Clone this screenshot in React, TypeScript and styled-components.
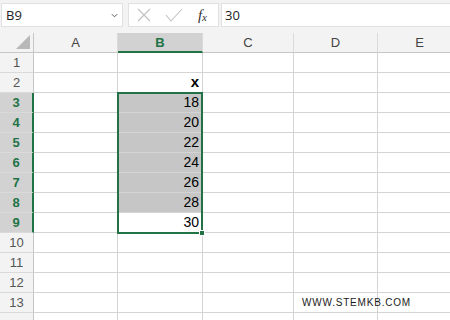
import React from "react";
import styled, { createGlobalStyle } from "styled-components";

const GREEN = "#217346";
const LINE = "#d4d4d4";

const columns = ["A", "B", "C", "D", "E"];
const values: Record<number, string> = {
  2: "x",
  3: "18",
  4: "20",
  5: "22",
  6: "24",
  7: "26",
  8: "28",
  9: "30",
};
const rows = Array.from({ length: 14 }, (_, i) => i + 1);

const isSelRow = (r: number) => r >= 3 && r <= 9;

const App = () => {
  return (
    <>
      <GlobalStyle />
      <Window>
        <Toolbar>
          <NameBox>
            <span>B9</span>
            <Chevron viewBox="0 0 8 5">
              <path d="M1 1l3 3 3-3" fill="none" stroke="#555" strokeWidth="1.1" />
            </Chevron>
          </NameBox>
          <IconBox>
            <svg width="14" height="14" viewBox="0 0 14 14">
              <path d="M1 1l12 12M13 1L1 13" stroke="#c2c2c2" strokeWidth="1.1" />
            </svg>
            <svg width="18" height="14" viewBox="0 0 18 14">
              <path d="M1 7l5 6L17 1" fill="none" stroke="#c2c2c2" strokeWidth="1.1" />
            </svg>
            <Fx>
              f<sub>x</sub>
            </Fx>
          </IconBox>
          <FormulaBox>30</FormulaBox>
        </Toolbar>
        <Sheet>
          <Corner>
            <svg width="14" height="14" viewBox="0 0 14 14">
              <path d="M14 0V14H0Z" fill="#b8b8b8" />
            </svg>
          </Corner>
          {columns.map((c) => (
            <ColHead key={"h" + c} $selected={c === "B"}>
              {c}
            </ColHead>
          ))}
          {rows.map((r) => (
            <React.Fragment key={r}>
              <RowHead $selected={isSelRow(r)}>{r < 14 ? r : null}</RowHead>
              {columns.map((c) => (
                <Cell
                  key={c}
                  $shaded={c === "B" && r >= 3 && r <= 8}
                  $bold={r === 2}
                >
                  {c === "B" ? values[r] : null}
                  {c === "D" && r === 13 ? <Watermark>WWW.STEMKB.COM</Watermark> : null}
                </Cell>
              ))}
            </React.Fragment>
          ))}
          <Selection>
            <FillHandle />
          </Selection>
        </Sheet>
      </Window>
    </>
  );
};

const GlobalStyle = createGlobalStyle`
  html, body {
    margin: 0;
    padding: 0;
    background: #ffffff;
  }
  * {
    box-sizing: border-box;
  }
`;

const Window = styled.div`
  width: 450px;
  height: 320px;
  overflow: hidden;
  background: #ffffff;
  font-family: "Liberation Sans", Arial, sans-serif;
`;

const Toolbar = styled.div`
  height: 33px;
  background: #f3f3f3;
  display: flex;
  align-items: flex-start;
  padding: 3px 0 0 1px;
  gap: 5px;
`;

const Box = styled.div`
  height: 24px;
  background: #ffffff;
  border: 1px solid #e1e1e1;
  display: flex;
  align-items: center;
`;

const NameBox = styled(Box)`
  width: 122px;
  justify-content: space-between;
  padding: 0 4px 0 4px;
  font-family: "Open Sans", "Noto Sans", sans-serif;
  font-size: 13px;
  color: #222;
`;

const Chevron = styled.svg`
  width: 7px;
  height: 5px;
`;

const IconBox = styled(Box)`
  width: 91px;
  padding: 0 11px 0 8px;
  justify-content: space-between;
`;

const Fx = styled.span`
  font-family: "Liberation Serif", "Times New Roman", serif;
  font-style: italic;
  font-size: 15px;
  color: #333;
  line-height: 1;

  sub {
    font-size: 11px;
    vertical-align: -1px;
  }
`;

const FormulaBox = styled(Box)`
  flex: 1;
  margin-left: -3px;
  border-right: none;
  padding-left: 3px;
  font-family: "Open Sans", "Noto Sans", sans-serif;
  font-size: 13px;
  color: #222;
`;

const Sheet = styled.div`
  position: relative;
  display: grid;
  grid-template-columns: 34px 84px 85px 91px 84px 84px;
  grid-auto-rows: 20px;
`;

const Corner = styled.div`
  background: #f3f3f3;
  border-right: 1px solid #c6c6c6;
  border-bottom: 1px solid #c6c6c6;
  display: flex;
  align-items: flex-end;
  justify-content: flex-end;
  padding: 0 3px 3px 0;
`;

const ColHead = styled.div<{ $selected?: boolean }>`
  background: ${(p) => (p.$selected ? "#d2d2d2" : "#f3f3f3")};
  color: ${(p) => (p.$selected ? GREEN : "#444")};
  font-weight: ${(p) => (p.$selected ? 700 : 400)};
  font-size: 13px;
  display: flex;
  align-items: center;
  justify-content: center;
  border-right: 1px solid #dadada;
  border-bottom: ${(p) => (p.$selected ? `2px solid ${GREEN}` : "1px solid #c6c6c6")};
  padding-top: ${(p) => (p.$selected ? "1px" : "0")};
`;

const RowHead = styled.div<{ $selected?: boolean }>`
  background: ${(p) => (p.$selected ? "#d2d2d2" : "#f3f3f3")};
  color: ${(p) => (p.$selected ? GREEN : "#555")};
  font-weight: ${(p) => (p.$selected ? 700 : 400)};
  font-size: 13px;
  display: flex;
  align-items: center;
  justify-content: center;
  border-right: ${(p) => (p.$selected ? `2px solid ${GREEN}` : "1px solid #c6c6c6")};
  border-bottom: 1px solid #dadada;
`;

const Cell = styled.div<{ $shaded?: boolean; $bold?: boolean }>`
  position: relative;
  background: ${(p) => (p.$shaded ? "#c6c6c6" : "#ffffff")};
  border-right: 1px solid ${LINE};
  border-bottom: 1px solid ${LINE};
  display: flex;
  align-items: flex-end;
  justify-content: flex-end;
  padding: 0 3px 1px 0;
  font-size: ${(p) => (p.$bold ? "15px" : "14px")};
  font-weight: ${(p) => (p.$bold ? 700 : 400)};
  color: #000;
  line-height: 18px;
`;

const Watermark = styled.span`
  position: absolute;
  z-index: 1;
  left: 8px;
  top: 3px;
  white-space: nowrap;
  font-family: "Liberation Sans", Arial, sans-serif;
  font-size: 10px;
  line-height: 13px;
  letter-spacing: 0.8px;
  color: #1a1a1a;
`;

const Selection = styled.div`
  position: absolute;
  z-index: 2;
  left: 117px;
  top: 59px;
  width: 86px;
  height: 142px;
  border: 2px solid ${GREEN};
  pointer-events: none;
`;

const FillHandle = styled.div`
  position: absolute;
  right: -4px;
  bottom: -4px;
  width: 6px;
  height: 6px;
  background: ${GREEN};
  border: 1px solid #ffffff;
`;

export default App;
